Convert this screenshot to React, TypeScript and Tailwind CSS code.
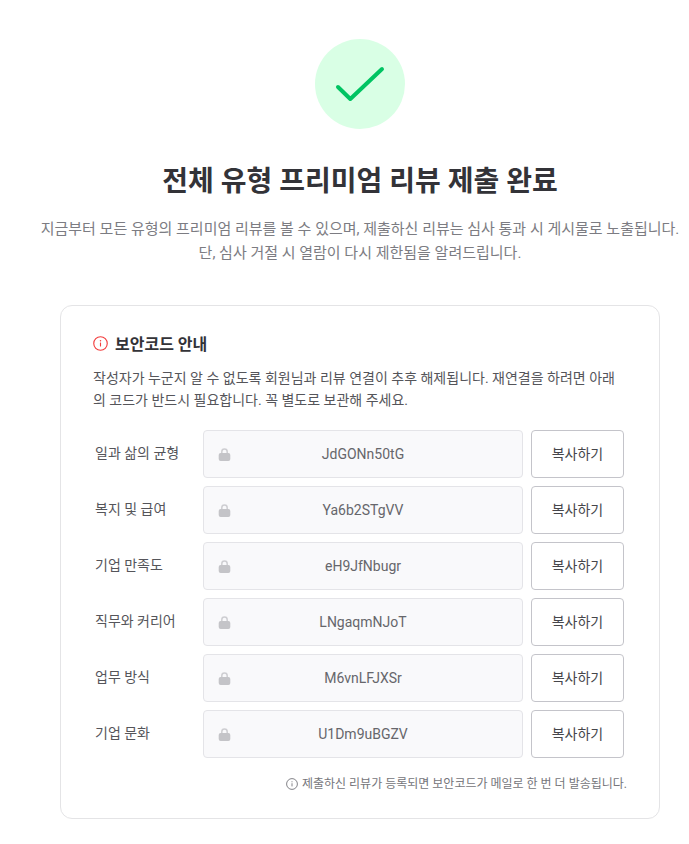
const rows = [
  ['일과 삶의 균형', 'JdGONn50tG'],
  ['복지 및 급여', 'Ya6b2STgVV'],
  ['기업 만족도', 'eH9JfNbugr'],
  ['직무와 커리어', 'LNgaqmNJoT'],
  ['업무 방식', 'M6vnLFJXSr'],
  ['기업 문화', 'U1Dm9uBGZV'],
];

function Info({ className }: { className: string }) {
  return (
    <svg className={className} viewBox="0 0 16 16" fill="none" stroke="currentColor" strokeWidth="1.2">
      <circle cx="8" cy="8" r="7.2" />
      <path d="M8 7v4.2" />
      <circle cx="8" cy="5" r=".8" fill="currentColor" stroke="none" />
    </svg>
  );
}

function Lock() {
  return (
    <svg className="mt-px ml-[14px] h-[14px] w-[14px] shrink-0" viewBox="0 0 14 14" fill="none">
      <path d="M3.8 6V3.8a2.7 2.7 0 0 1 5.4 0V6" stroke="#ceced2" strokeWidth="1.5" />
      <rect x="0.7" y="5" width="11.6" height="8" rx="2" fill="#c4c4c8" />
    </svg>
  );
}

export default function App() {
  return (
    <main className="h-[844px] w-[720px] overflow-hidden bg-white font-['Roboto','Noto_Sans_CJK_KR',sans-serif] text-[#333338]">
      <header className="flex flex-col items-center pt-[39px]">
        <div className="flex h-[90px] w-[90px] items-center justify-center rounded-full bg-[#d9ffe5]">
          <svg width="90" height="90" viewBox="0 0 90 90" fill="none">
            <path d="M23 48l12.3 12L67 30" stroke="#00c462" strokeWidth="4" strokeLinecap="round" strokeLinejoin="round" />
          </svg>
        </div>
        <h1 className="mt-[33px] text-[28px] leading-[40px] font-bold whitespace-nowrap">전체 유형 프리미엄 리뷰 제출 완료</h1>
        <p className="mt-[15px] text-center text-[15px] leading-[24px] whitespace-nowrap text-[#7c7c82]">
          지금부터 모든 유형의 프리미엄 리뷰를 볼 수 있으며, 제출하신 리뷰는 심사 통과 시 게시물로 노출됩니다.
          <br />단, 심사 거절 시 열람이 다시 제한됨을 알려드립니다.
        </p>
      </header>
      <section className="mt-[40px] ml-[60px] h-[514px] w-[600px] rounded-[12px] border border-[#e4e4e6] px-[32px] pt-[26px]">
        <h2 className="flex h-[24px] items-center gap-[7px] text-[16px] leading-[24px] font-bold">
          <Info className="mb-px h-[15px] w-[15px] text-[#f23d3d]" />
          <span className="pt-px">보안코드 안내</span>
        </h2>
        <p className="mt-[11px] text-[14px] leading-[22px] whitespace-nowrap text-[#55555a]">
          작성자가 누군지 알 수 없도록 회원님과 리뷰 연결이 추후 해제됩니다. 재연결을 하려면 아래<br />의 코드가 반드시 필요합니다. 꼭 별도로 보관해 주세요.
        </p>
        <div className="mt-[19px] flex flex-col gap-2">
          {rows.map(([label, code]) => (
            <div key={code} className="flex h-12 items-center">
              <div className="w-[110px] shrink-0 pb-[2px] pl-[2px] text-[14px] text-[#55555a]">{label}</div>
              <div className="flex h-12 w-[320px] shrink-0 items-center rounded-[4px] border border-[#e4e4e8] bg-[#f9f9fb]">
                <Lock />
                <span className="mr-[28px] flex-1 text-center text-[14px] text-[#66666b]">{code}</span>
              </div>
              <button className="ml-2 h-12 w-[93px] shrink-0 rounded-[4px] border border-[#c4c4ca] text-[14px] text-[#46464b]">복사하기</button>
            </div>
          ))}
        </div>
        <div className="mt-[16px] flex w-[534px] items-center justify-end gap-1 text-[12px] leading-[20px] whitespace-nowrap text-[#75757a]">
          <Info className="mb-px h-3 w-3" />제출하신 리뷰가 등록되면 보안코드가 메일로 한 번 더 발송됩니다.
        </div>
      </section>
    </main>
  );
}
